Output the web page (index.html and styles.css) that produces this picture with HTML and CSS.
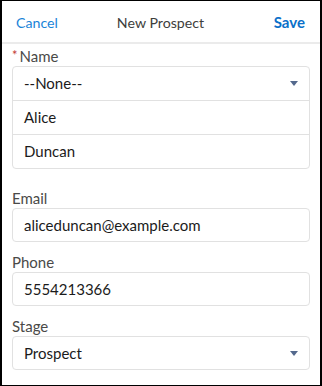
FILE: index.html
```html
<!DOCTYPE html>
<html lang="en">
<head>
<meta charset="utf-8">
<title>New Prospect</title>
<link rel="stylesheet" href="styles.css">
</head>
<body>
<div class="frame">
  <header class="topbar">
    <span class="btn-cancel">Cancel</span>
    <span class="title">New Prospect</span>
    <span class="btn-save">Save</span>
  </header>
  <form class="form">
    <div class="field field-name">
      <div class="label"><span class="req">*</span>Name</div>
      <div class="compound">
        <div class="row select-row">
          <span>--None--</span>
          <span class="caret"></span>
        </div>
        <div class="row">Alice</div>
        <div class="row">Duncan</div>
      </div>
    </div>
    <div class="field">
      <div class="label">Email</div>
      <div class="input">aliceduncan@example.com</div>
    </div>
    <div class="field">
      <div class="label">Phone</div>
      <div class="input">5554213366</div>
    </div>
    <div class="field">
      <div class="label">Stage</div>
      <div class="input select-row">
        <span>Prospect</span>
        <span class="caret"></span>
      </div>
    </div>
  </form>
</div>
</body>
</html>
```
FILE: styles.css
```css
html, body {
  margin: 0;
  padding: 0;
  background: #fff;
}
body {
  font-family: "Lato", "Open Sans", sans-serif;
  font-size: 15px;
  color: #1b1b1b;
}
.frame {
  box-sizing: border-box;
  width: 322px;
  height: 386px;
  border-style: solid;
  border-color: #000;
  border-width: 1px 2px 1px 2px;
  background: #fff;
  overflow: hidden;
}
.topbar {
  height: 43px;
  border-bottom: 2px solid #ebebeb;
  display: grid;
  grid-template-columns: 1fr auto 1fr;
  align-items: center;
  padding: 1px 15px 0 14px;
  box-sizing: border-box;
  font-size: 14.2px;
}
.btn-cancel {
  color: #1a84d8;
  justify-self: start;
}
.title {
  color: #3e3e3c;
}
.btn-save {
  color: #0a70c9;
  font-weight: 700;
  font-size: 15px;
  justify-self: end;
}
.form {
  padding: 2px 10px 0;
}
.field {
  margin-bottom: 10px;
}
.field-name {
  margin-bottom: 19px;
}
.label {
  height: 20px;
  line-height: 20px;
  color: #4a4a48;
  font-size: 15px;
}
.req {
  color: #c23934;
  font-size: 13px;
  margin-right: 2px;
  vertical-align: top;
  position: relative;
  top: -1px;
}
.compound {
  border: 1px solid #e1e1e1;
  border-radius: 4px;
}
.row {
  height: 33px;
  line-height: 33px;
  padding: 0 11px;
  border-bottom: 1px solid #e1e1e1;
}
.row:last-child {
  border-bottom: none;
}
.input {
  box-sizing: border-box;
  height: 34px;
  line-height: 32px;
  padding: 0 11px;
  border: 1px solid #e1e1e1;
  border-radius: 4px;
}
.select-row {
  display: flex;
  align-items: center;
  justify-content: space-between;
}
.caret {
  width: 0;
  height: 0;
  border-left: 4px solid transparent;
  border-right: 4px solid transparent;
  border-top: 5px solid #54698d;
}
```
